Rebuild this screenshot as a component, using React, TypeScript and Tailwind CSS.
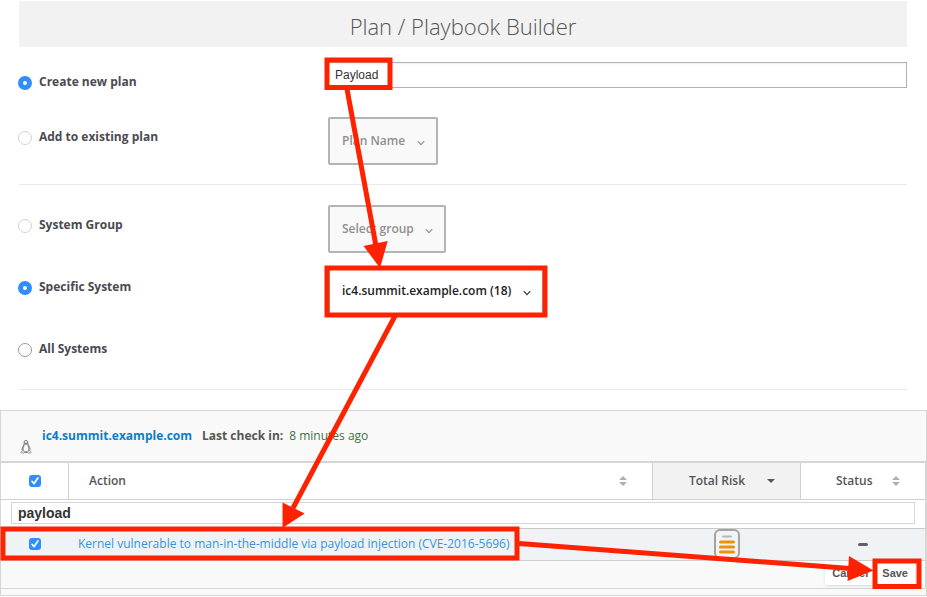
import type { ReactNode } from "react";

const RED = "#ff2200";

function Radio({ id, name, label, checked, tone }: { id: string; name: string; label: string; checked?: boolean; tone?: "faint" | "normal" }) {
  const ring = tone === "faint" ? "border-[#d2d2d2]" : "border-[#999]";
  return (
    <div className="flex items-start gap-[7px]">
      <input
        id={id}
        type="radio"
        name={name}
        defaultChecked={checked}
        className={`mt-0.5 size-[14px] shrink-0 appearance-none rounded-full border bg-white checked:border-[5px] checked:border-[#318dfb] ${ring}`}
      />
      <label htmlFor={id} className="text-xs leading-4 font-bold text-[#4a4a50]">
        {label}
      </label>
    </div>
  );
}

function Row({ children, className }: { children: ReactNode; className: string }) {
  return <div className={`grid grid-cols-[310px_1fr] items-start ${className}`}>{children}</div>;
}

function Dropdown({ label, text, disabled }: { label: string; text: string; disabled?: boolean }) {
  return (
    <div className="grid w-fit items-center">
      <select
        aria-label={label}
        disabled={disabled}
        className="col-start-1 row-start-1 h-12 appearance-none rounded-xs border-2 border-[#b4b4b4] bg-white pr-[30px] pl-3 text-xs font-semibold text-[#222] opacity-100 disabled:bg-[#f9f9f9] disabled:text-[#8f8f8f]"
      >
        <option>{text}</option>
      </select>
      <svg
        className={`pointer-events-none col-start-1 row-start-1 mt-1 mr-[13px] justify-self-end ${disabled ? "text-[#8f8f8f]" : "text-[#333]"}`}
        width="8"
        height="6"
        viewBox="0 0 8 6"
        fill="none"
        stroke="currentColor"
        strokeWidth="1.1"
      >
        <path d="M0.7 1.2 L4 4.6 L7.3 1.2" />
      </svg>
    </div>
  );
}

function Check({ label }: { label: string }) {
  return (
    <span className="grid place-items-center">
      <input type="checkbox" aria-label={label} defaultChecked className="col-start-1 row-start-1 size-3 appearance-none rounded-[3px] bg-[#318dfb]" />
      <svg className="pointer-events-none col-start-1 row-start-1" width="12" height="12" viewBox="0 0 12 12" fill="none" stroke="#fff" strokeWidth="1.7">
        <path d="M3 6.3 L5.1 8.6 L8.9 3" strokeLinecap="round" strokeLinejoin="round" />
      </svg>
    </span>
  );
}

function SortIcon() {
  return (
    <svg width="8" height="10" viewBox="0 0 8 10" fill="#b0b0b0">
      <path d="M4 0 L8 4 H0 Z M0 6 H8 L4 10 Z" />
    </svg>
  );
}

function Penguin() {
  return (
    <svg width="12" height="14" viewBox="0 0 12 14" fill="none" stroke="#555" strokeWidth="0.8">
      <path d="M4.2 3.2 C4 1 4.8 0.4 6 0.4 C7.4 0.4 7.9 1.4 7.8 3.2 C7.8 4.8 9.8 6.6 10 9 C10.1 10 9.8 10.6 9.4 11 M4.2 3.2 C4.4 5 2.2 7 2 9 C1.9 10 2.2 10.4 2.6 10.9" fill="#e8e8e8" />
      <path d="M4.6 4.2 C4 6.4 3 7.8 3.4 10.2 C4.2 12 7.8 12 8.7 10.2 C9 7.8 8 6.2 7.4 4.2 Z" fill="#fff" stroke="#777" />
      <path d="M4.7 3 L6 3.8 L7.4 3" />
      <path d="M2.5 10.4 L0.6 12.4 L3.6 13.4 L4.8 12.2 Z M9.4 10.4 L11.4 12.3 L8.4 13.4 L7.3 12.2 Z" fill="#ddd" stroke="#999" />
      <path d="M4.8 12.6 H7.3" />
    </svg>
  );
}

function RiskIcon() {
  return (
    <svg width="26" height="30" viewBox="0 0 26 30" fill="none" strokeLinecap="round">
      <rect x="1" y="1" width="24" height="28" rx="5" stroke="#a3a3a3" strokeWidth="2" fill="#f1f3f5" />
      <path d="M9 7.5 H17" stroke="#b8b8b8" strokeWidth="2" />
      <path d="M6.5 13 H19.5 M6.5 18 H19.5 M6.5 23 H19.5" stroke="#f29100" strokeWidth="3" />
    </svg>
  );
}

function Annotations() {
  return (
    <svg className="pointer-events-none absolute top-0 left-0" width="927" height="597" viewBox="0 0 927 597">
      <g fill="none" stroke={RED} strokeWidth="5">
        <rect x="327" y="60" width="63" height="27.5" />
        <rect x="327" y="268" width="218" height="47" />
        <rect x="3" y="529" width="514" height="29" />
        <rect x="875" y="561" width="44" height="25.5" />
        <path d="M347 89 L376 246" />
        <path d="M395 316 L293 508" />
        <path d="M519 543.5 L850 568.5" />
      </g>
      <g fill={RED}>
        <path d="M363.5 246 L387.7 241 L380 268 Z" />
        <path d="M282.5 502.5 L304.7 513.5 L282.5 528 Z" />
        <path d="M849 556 L847.5 581 L873.5 570.5 Z" />
      </g>
    </svg>
  );
}

export default function App() {
  return (
    <div className="relative bg-white pb-px font-['Open_Sans','Noto_Sans',sans-serif] text-xs text-[#4d4d4d]">
      <div className="mr-5 ml-[19px] pt-px">
        <h1 className="bg-[#f2f2f2] pt-[10px] pb-1.5 text-center text-[22px] leading-[30px] font-light text-[#555]">Plan / Playbook Builder</h1>
      </div>

      <form className="mr-5 ml-[18px]">
        <Row className="h-[70px] pt-[15px]">
          <div className="pt-3">
            <Radio id="new" name="plan" label="Create new plan" checked />
          </div>
          <input
            aria-label="Plan name"
            defaultValue="Payload"
            className="h-[26px] w-full border border-[#b2b2b2] px-1.5 font-['Liberation_Sans',Arial,sans-serif] text-xs text-[#333] shadow-[inset_0_1px_2px_#eee]"
          />
        </Row>
        <Row className="h-[67px]">
          <div className="pt-3">
            <Radio id="existing" name="plan" label="Add to existing plan" tone="faint" />
          </div>
          <Dropdown label="Existing plan" text="Plan Name" disabled />
        </Row>
        <hr className="ml-px border-[#eaeaea]" />
        <Row className="h-[82px] pt-5">
          <div className="pt-3">
            <Radio id="group" name="target" label="System Group" tone="faint" />
          </div>
          <Dropdown label="System group" text="Select group" disabled />
        </Row>
        <Row className="h-[62px]">
          <div className="pt-3">
            <Radio id="specific" name="target" label="Specific System" checked />
          </div>
          <Dropdown label="System" text="ic4.summit.example.com (18)" />
        </Row>
        <Row className="h-[60px]">
          <div className="pt-3">
            <Radio id="all" name="target" label="All Systems" />
          </div>
        </Row>
        <hr className="ml-px border-[#eaeaea]" />
      </form>

      <section className="mt-5 border border-[#d6d6d6] bg-[#f9f9f9] pb-1.5">
        <header className="flex h-[50px] gap-[10px] pt-[17px] pl-[19px] leading-4">
          <span className="pt-3">
            <Penguin />
          </span>
          <a href="#system" className="font-bold text-[#0a7fc8]">
            ic4.summit.example.com
          </a>
          <p>
            <span className="font-bold text-[#555]">Last check in:</span>
            <span className="ml-1.5 text-[#3a763c]">8 minutes ago</span>
          </p>
        </header>
        <table className="w-full table-fixed border-separate border-spacing-0 border-t-2 border-r border-b border-[#d6d6d6]">
          <colgroup>
            <col className="w-[68px]" />
            <col />
            <col className="w-[149px]" />
            <col className="w-[124px]" />
          </colgroup>
          <thead>
            <tr className="h-[37px] bg-white font-semibold text-[#555]">
              <th className="border-r border-b border-[#d0d0d0]">
                <Check label="Select all actions" />
              </th>
              <th className="border-b border-[#d0d0d0]">
                <div className="flex items-center justify-between pr-[25px] pl-5 font-semibold">
                  Action <SortIcon />
                </div>
              </th>
              <th className="border-x border-b border-[#d0d0d0] bg-[#f2f2f2]">
                <div className="flex items-center justify-between pr-[25px] pl-9 font-semibold">
                  Total Risk
                  <svg width="8" height="4" viewBox="0 0 8 4" fill="#555">
                    <path d="M0 0 H8 L4 4 Z" />
                  </svg>
                </div>
              </th>
              <th className="border-b border-[#d0d0d0]">
                <div className="flex items-center justify-between pr-[25px] pl-[35px] font-semibold">
                  Status <SortIcon />
                </div>
              </th>
            </tr>
          </thead>
          <tbody>
            <tr className="h-[29px] bg-white">
              <td colSpan={4} className="border-b border-[#c8c8c8] pt-0.5 pr-[10px] pb-1 pl-[10px]">
                <input
                  aria-label="Filter actions"
                  defaultValue="payload"
                  className="block h-[22px] w-full border border-[#d6d6d6] bg-white px-1.5 font-['Liberation_Sans',Arial,sans-serif] text-sm font-bold text-[#333]"
                />
              </td>
            </tr>
            <tr className="h-8 bg-[#eff3f6]">
              <td className="border-b border-[#d0d0d0] pb-px">
                <Check label="Select action" />
              </td>
              <td className="border-b border-[#d0d0d0] pb-px pl-[9px] whitespace-nowrap">
                <a href="#action" className="text-[#3693dc]">
                  Kernel vulnerable to man-in-the-middle via payload injection (CVE-2016-5696)
                </a>
              </td>
              <td className="border-b border-[#d0d0d0] pb-px">
                <div className="flex justify-center">
                  <RiskIcon />
                </div>
              </td>
              <td className="border-b border-[#d0d0d0] pb-px">
                <div className="mx-auto h-[3px] w-[10px] rounded-xs bg-[#606060]" />
              </td>
            </tr>
            <tr className="h-[27px]">
              <td colSpan={4} className="align-top">
                <div className="flex justify-end pr-[10px] font-['Liberation_Sans',Arial,sans-serif] text-[11px] font-bold text-[#555]">
                  <button type="button" className="h-6 bg-white px-[7px] shadow-sm">
                    Cancel
                  </button>
                  <button type="button" className="h-6 bg-white px-[7px] shadow-sm">
                    Save
                  </button>
                </div>
              </td>
            </tr>
          </tbody>
        </table>
      </section>
      <Annotations />
    </div>
  );
}
